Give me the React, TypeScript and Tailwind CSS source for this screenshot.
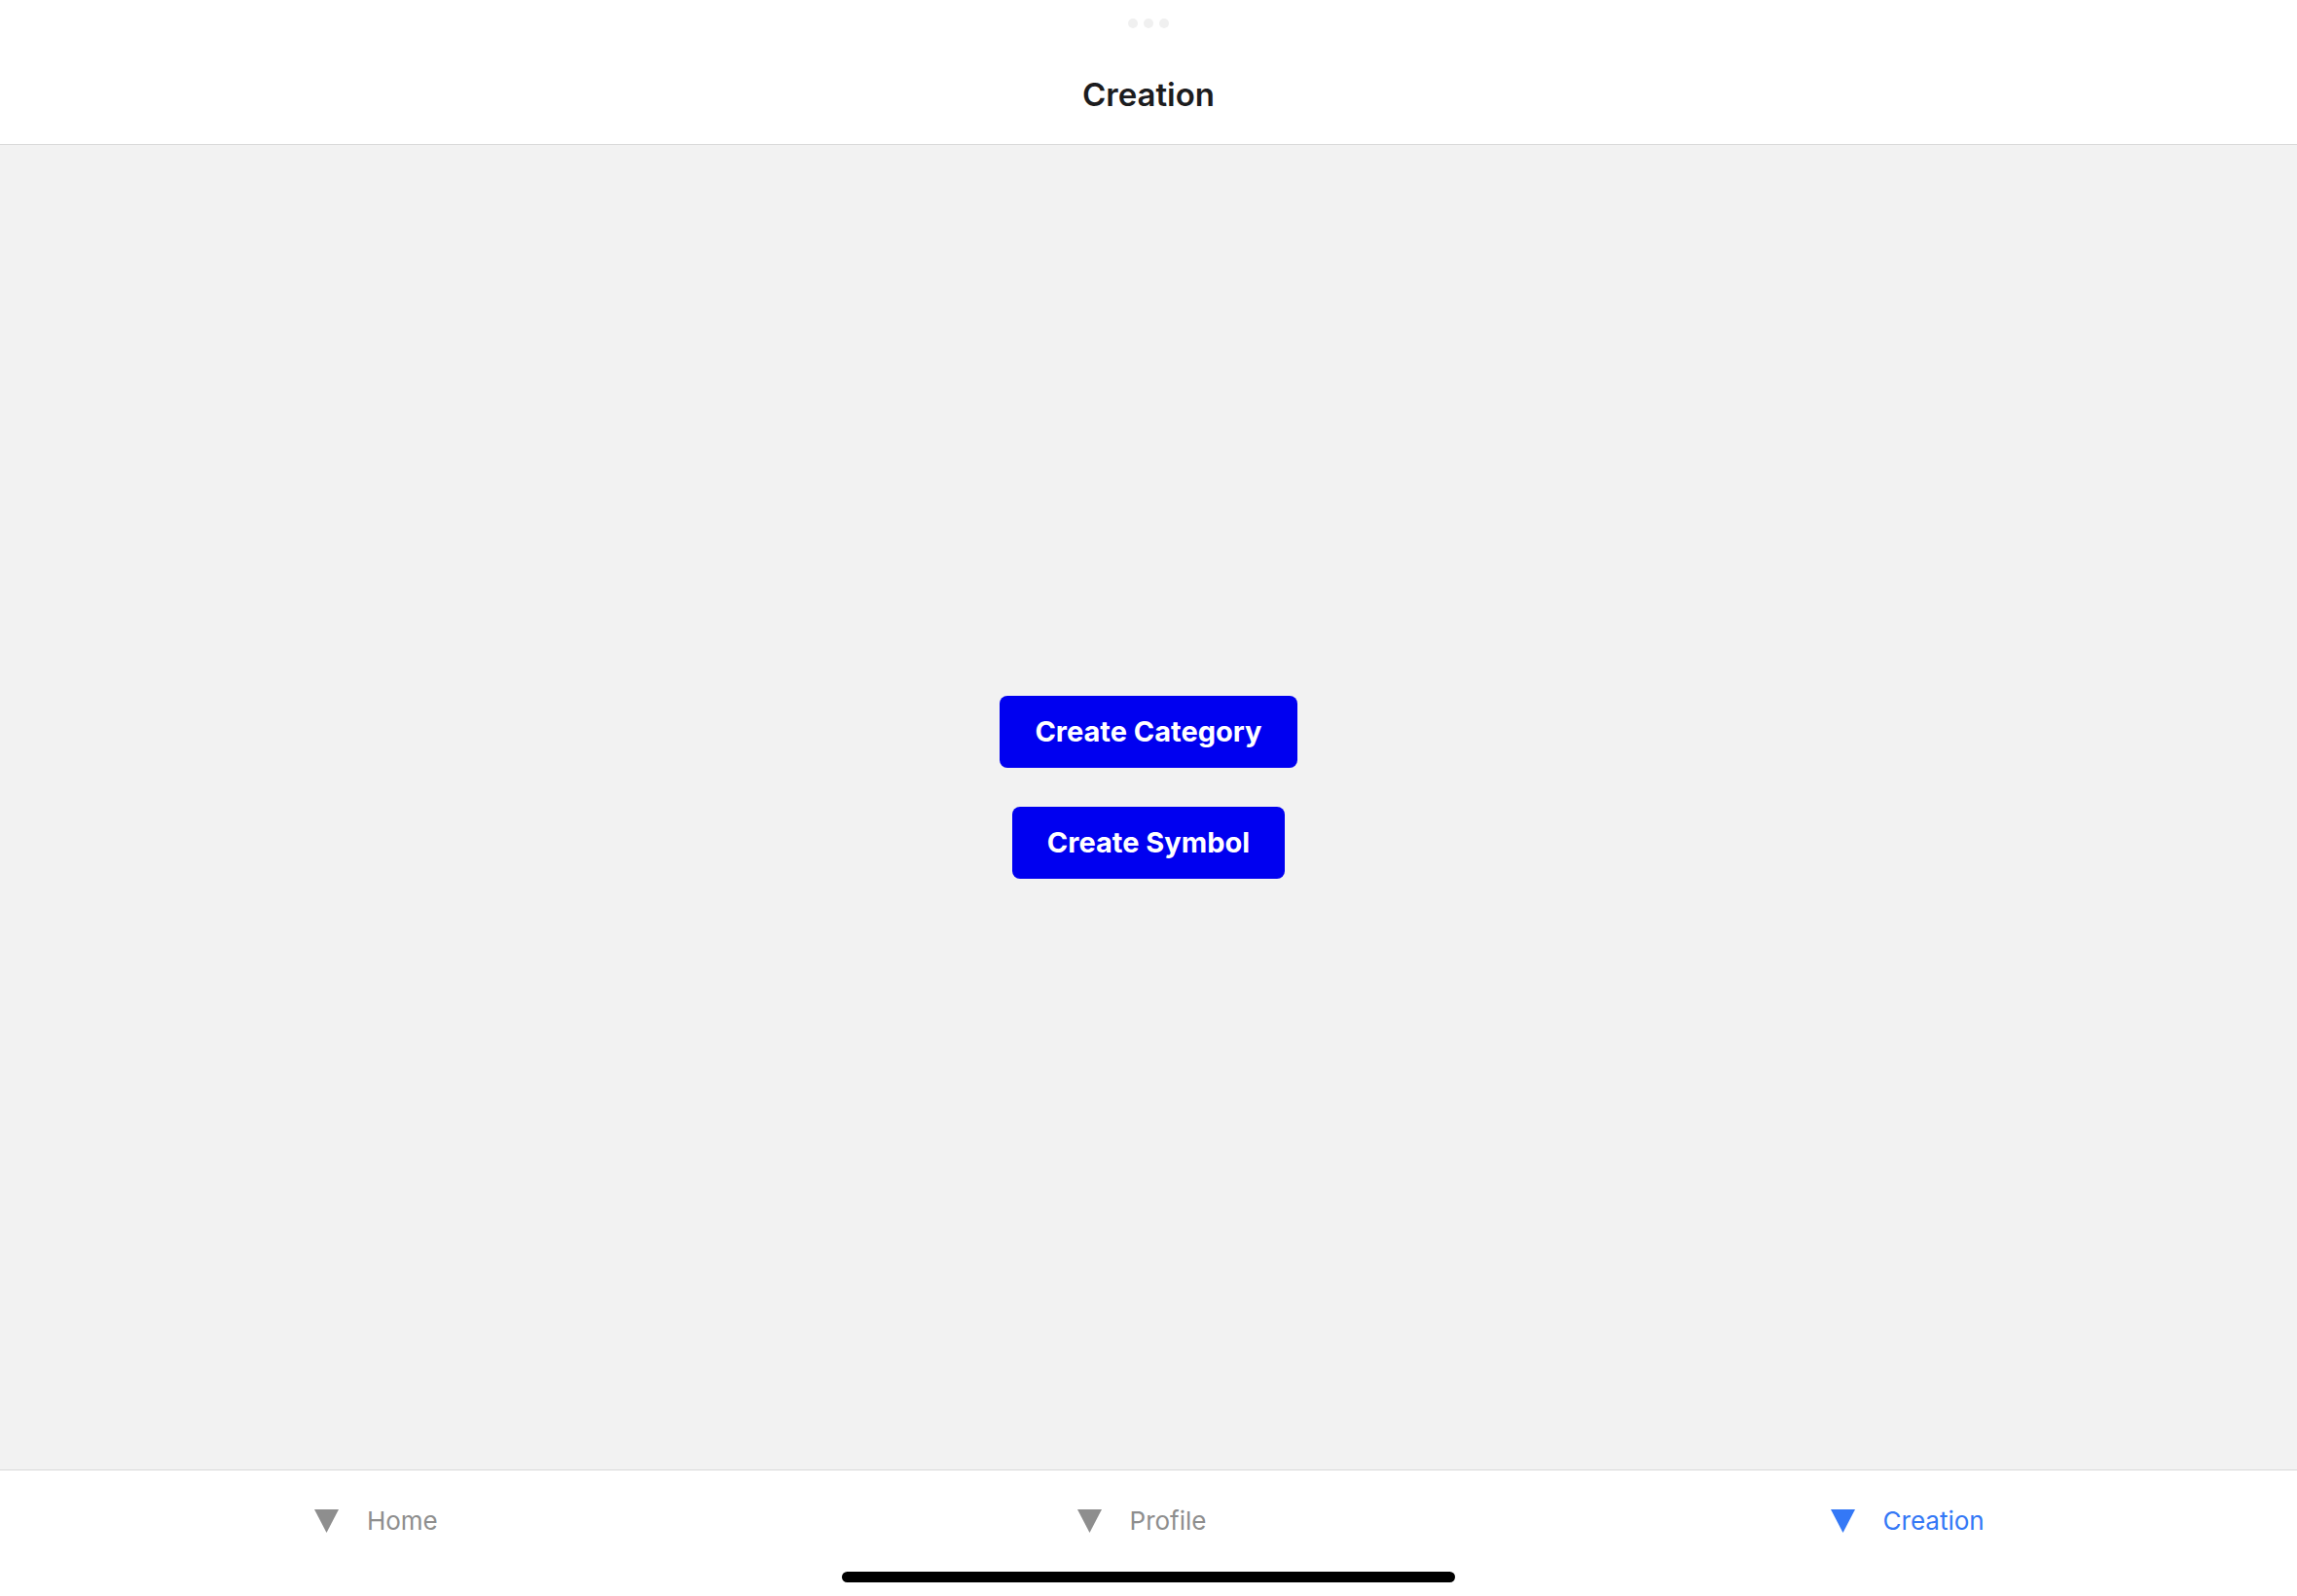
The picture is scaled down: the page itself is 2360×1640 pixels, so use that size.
const tabs = [
  { label: 'Home', active: false },
  { label: 'Profile', active: false },
  { label: 'Creation', active: true },
];

const TabIcon = ({ active }: { active: boolean }) => (
  <svg width="25" height="24" viewBox="0 0 25 24" className={active ? 'text-[#3478f6]' : 'text-[#8e8e8e]'}>
    <path d="M0 0 H25 L12.5 24 Z" fill="currentColor" />
  </svg>
);

const App = () => {
  return (
    <div className="flex h-[1640px] w-[2360px] flex-col bg-white font-['Inter','Liberation_Sans',sans-serif]">
      <header className="relative flex h-[149px] shrink-0 items-center justify-center border-b border-[#d9d9d9] bg-white pt-[48px]">
        <div className="absolute left-1/2 top-[19px] flex -translate-x-1/2 gap-[6px]">
          <span className="h-[10px] w-[10px] rounded-full bg-[#f0f0f0]" />
          <span className="h-[10px] w-[10px] rounded-full bg-[#f0f0f0]" />
          <span className="h-[10px] w-[10px] rounded-full bg-[#f0f0f0]" />
        </div>
        <h1 className="text-[33px] font-semibold text-[#1c1c1e]">Creation</h1>
      </header>

      <main className="flex flex-1 flex-col items-center justify-center gap-[40px] bg-[#f2f2f2] pb-[41px]">
        <button className="flex h-[74px] items-center rounded-[8px] bg-[#0000f0] px-[36px] text-[29px] font-bold text-white">
          Create Category
        </button>
        <button className="flex h-[74px] items-center rounded-[8px] bg-[#0000f0] px-[36px] text-[29px] font-bold text-white">
          Create Symbol
        </button>
      </main>

      <nav className="flex h-[130px] shrink-0 flex-col border-t border-[#d9d9d9] bg-white">
        <div className="flex h-[103px] items-center">
          {tabs.map((tab) => (
            <div key={tab.label} className="flex flex-1 items-center justify-center gap-[29px] pr-[14px]">
              <TabIcon active={tab.active} />
              <span className={`text-[26px] ${tab.active ? 'text-[#3478f6]' : 'text-[#8e8e8e]'}`}>{tab.label}</span>
            </div>
          ))}
        </div>
        <div className="mt-[1px] flex justify-center">
          <div className="h-[11px] w-[630px] rounded-full bg-black" />
        </div>
      </nav>
    </div>
  );
};

export default App;
